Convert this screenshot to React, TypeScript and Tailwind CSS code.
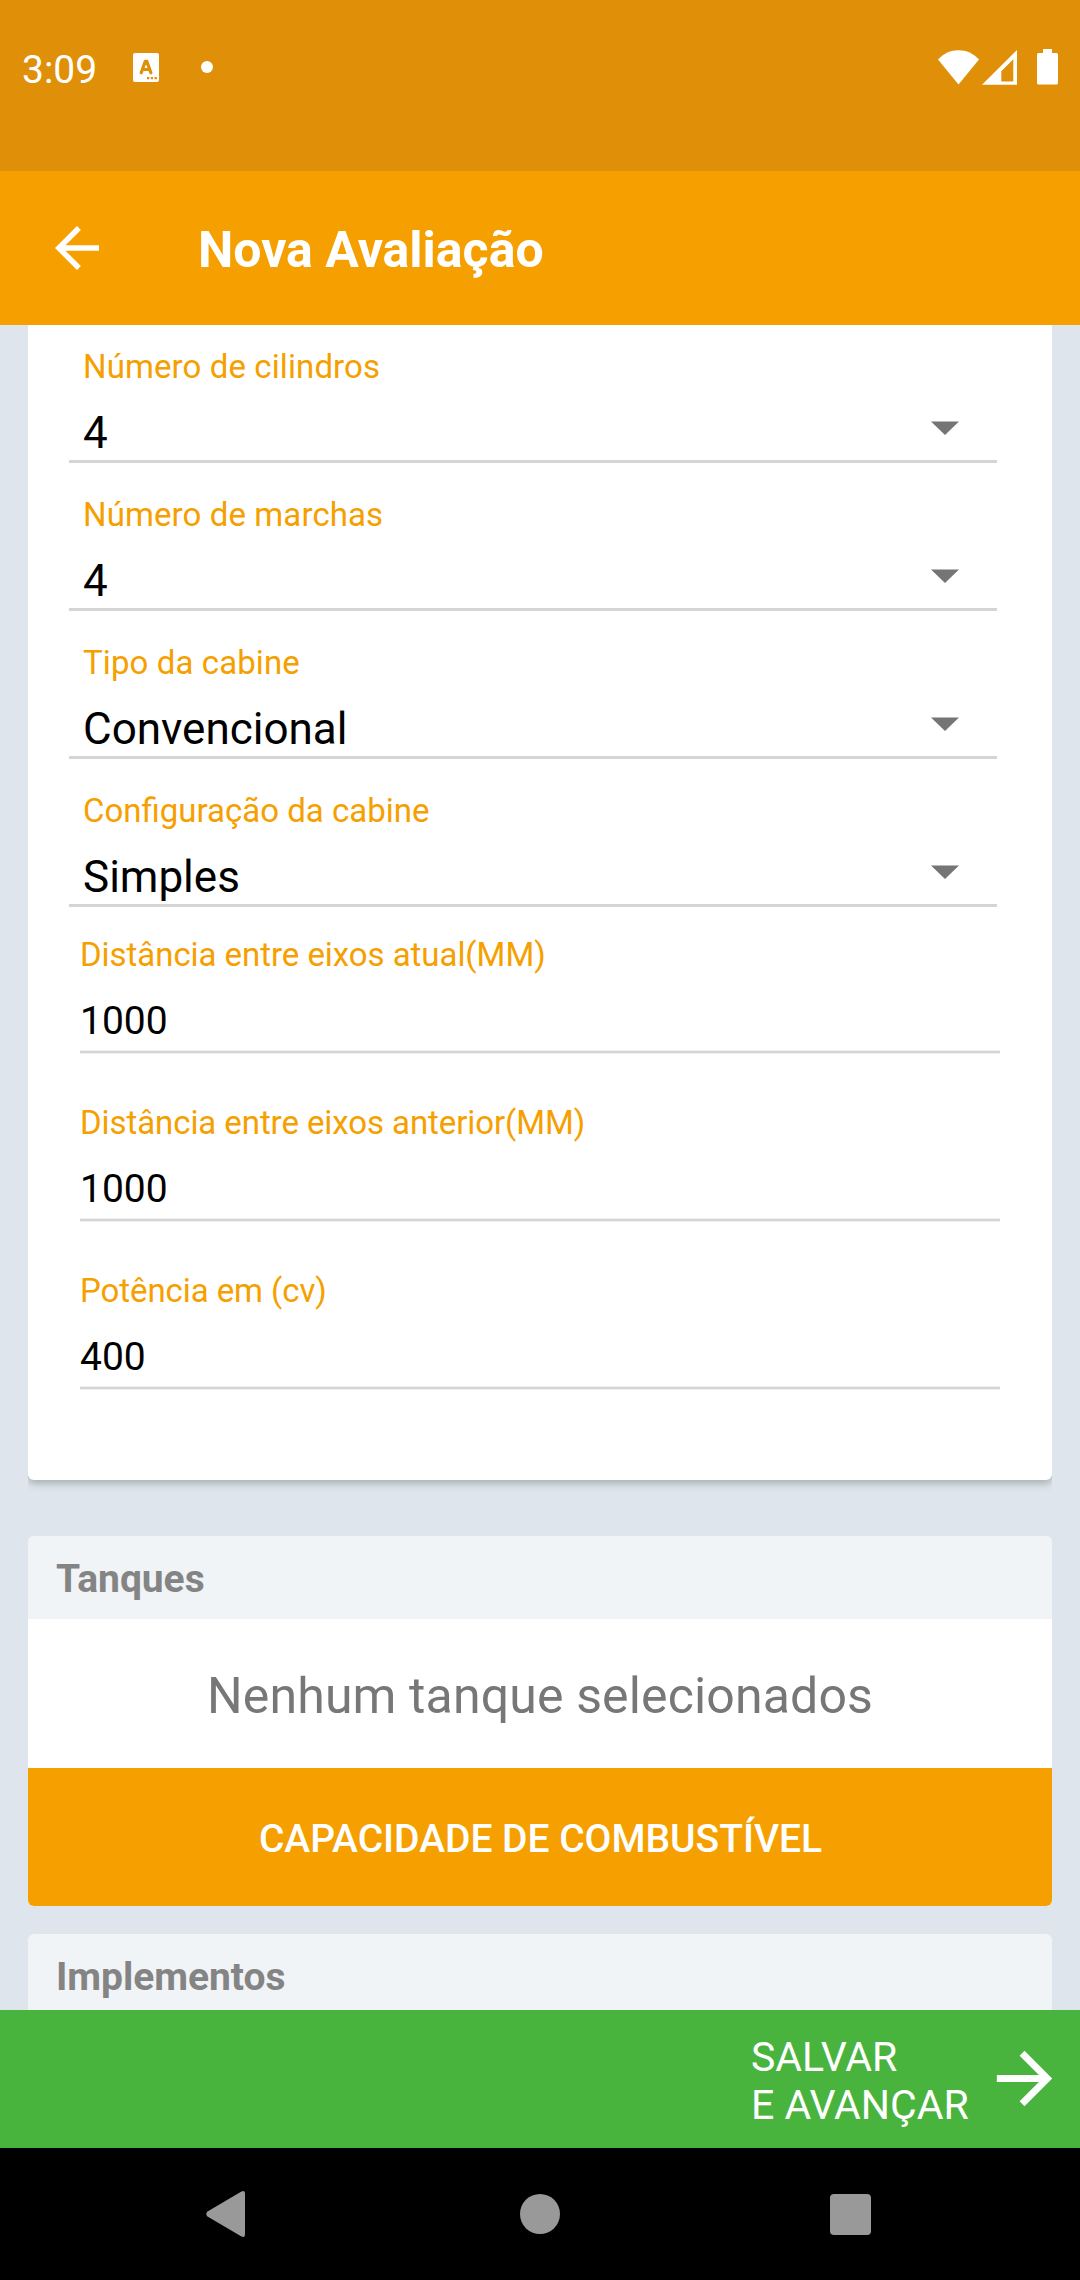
type Field = { label: string; value: string; tracking?: string };

const selects: Field[] = [
  { label: "Número de cilindros", value: "4", tracking: "tracking-[0.1px]" },
  { label: "Número de marchas", value: "4", tracking: "tracking-[0.1px]" },
  { label: "Tipo da cabine", value: "Convencional", tracking: "tracking-[0.1px]" },
  { label: "Configuração da cabine", value: "Simples" },
];

const inputs: Field[] = [
  { label: "Distância entre eixos atual(MM)", value: "1000", tracking: "tracking-[-0.05px]" },
  { label: "Distância entre eixos anterior(MM)", value: "1000", tracking: "tracking-[-0.08px]" },
  { label: "Potência em (cv)", value: "400", tracking: "tracking-[-0.08px]" },
];

function StatusBar() {
  return (
    <div className="flex h-[171px] shrink-0 items-start bg-[#df9008] pt-[47px] text-white">
      <span className="ml-[22px] w-[111px] text-[39px] leading-[46px] whitespace-nowrap">3:09</span>
      <svg className="mt-[6px] h-[29px] w-[26px]" viewBox="0 0 26 29">
        <rect width="26" height="29" rx="2" fill="#fff" />
        <path d="M8.2 19.8 12.300 8.400h1.500l4.100 11.400M9.700 16.500h6.800" fill="none" stroke="#df9008" strokeWidth="3.2" strokeLinecap="round" strokeLinejoin="round" />
        <path d="M14 24h2.300v2.300H14zM17.800 24h2.300v2.300h-2.300zM21.600 24h2.300v2.300h-2.300z" fill="#df9008" />
      </svg>
      <span className="mt-[14px] ml-[42px] size-3 rounded-full bg-white" />
      <div className="mt-[2px] mr-[22px] ml-auto flex">
        <svg className="h-9 w-[41px]" viewBox="0 0 41 36" fill="#fff">
          <path d="M0 10.500C5.600 4.400 12.400 1.200 20.500 1.200S35.400 4.400 41 10.500L20.500 35.500z" />
        </svg>
        <svg className="ml-[3px] h-9 w-[35px]" viewBox="0 0 35 36" fill="#fff" fillRule="evenodd">
          <path d="M35 1v34.700H0zM31.300 10.300 19.300 22.300V32.500H31.300z" />
        </svg>
        <svg className="ml-[20px] h-9 w-[21px]" viewBox="0 0 21 36" fill="#fff">
          <path d="M6 0h9v4h4.500Q21 4 21 5.500v28.500q0 1.600-1.600 1.600H1.600Q0 35.600 0 34V5.500Q0 4 1.500 4H6z" />
        </svg>
      </div>
    </div>
  );
}

function AppBar() {
  return (
    <header className="flex h-[154px] shrink-0 items-center bg-[#f5a000] pl-[44px] text-white">
      <svg className="size-[66px]" viewBox="0 0 24 24" fill="currentColor">
        <path d="M20 11H7.830l5.590-5.590L12 4l-8 8 8 8 1.410-1.410L7.830 13H20v-2z" />
      </svg>
      <h1 className="ml-[88px] pt-[3px] text-[50px] leading-[58px] font-bold">Nova Avaliação</h1>
    </header>
  );
}

function FieldLabel({ label, tracking = "" }: { label: string; tracking?: string }) {
  return <span className={`text-[33px] leading-[40px] text-[#f5a000] ${tracking}`}>{label}</span>;
}

function SelectField({ label, value, tracking }: Field) {
  return (
    <div className="mr-[55px] ml-[41px] flex h-[148px] flex-col border-b-[3px] border-[#d5d5d5] pt-[32px] pl-[14px]">
      <FieldLabel label={label} tracking={tracking} />
      <div className="mt-[16px] flex h-[57px] items-start justify-between pr-[38px]">
        <span className="pt-[5px] text-[44px] leading-[50px] text-black">{value}</span>
        <svg className="mt-[18px] h-[14px] w-[28px]" viewBox="0 0 28 14">
          <path d="M0 .5h28L14 14z" fill="#757575" />
        </svg>
      </div>
    </div>
  );
}

function TextField({ label, value, tracking }: Field) {
  return (
    <div className="mx-[52px] flex h-[168px] flex-col pt-[12px]">
      <FieldLabel label={label} tracking={tracking} />
      <span className="mt-[25px] text-[39px] leading-[42px] text-black">{value}</span>
      <div className="mt-[8px] h-1 border-y border-[#f0f0f0] bg-[#d5d5d5]" />
    </div>
  );
}

function CardTitle({ children }: { children: string }) {
  return (
    <h2 className="h-[83px] bg-[#f0f4f7] pt-[20px] pl-[28px] text-[39px] leading-[46px] font-bold tracking-[-0.05px] text-[#848484]">
      {children}
    </h2>
  );
}

export default function App() {
  return (
    <div className="flex h-[2280px] w-[1080px] flex-col overflow-hidden font-['Roboto',sans-serif]">
      <StatusBar />
      <AppBar />
      <main className="flex h-[1685px] shrink-0 flex-col overflow-hidden bg-[#dee5ed] px-[28px]">
        <section className="h-[1155px] shrink-0 rounded-b-[6px] bg-white shadow-[0_4px_7px_0_rgba(100,112,100,0.42)] [clip-path:inset(0_0_-12px_0)]">
          <div className="-mt-[10px]">
            {selects.map((f) => (
              <SelectField key={f.label} {...f} />
            ))}
          </div>
          <div className="pt-[16px]">
            {inputs.map((f) => (
              <TextField key={f.label} {...f} />
            ))}
          </div>
        </section>
        <section className="mt-[56px] h-[370px] shrink-0 overflow-hidden rounded-[6px] bg-white">
          <CardTitle>Tanques</CardTitle>
          <p className="flex h-[149px] items-center justify-center pt-[4px] text-[50px] leading-[58px] tracking-[0.14px] text-[#777777]">
            Nenhum tanque selecionados
          </p>
          <button className="flex h-[138px] w-full items-center justify-center bg-[#f5a000] pt-[4px] pl-px text-[39px] leading-[46px] font-medium tracking-[-0.03px] text-white">
            CAPACIDADE DE COMBUSTÍVEL
          </button>
        </section>
        <section className="mt-[28px] shrink-0 overflow-hidden rounded-t-[6px]">
          <CardTitle>Implementos</CardTitle>
        </section>
      </main>
      <button className="flex h-[138px] shrink-0 items-center justify-end bg-[#48b43e] pr-[14px] text-left text-white">
        <span className="w-[232px] pt-[4px] text-[41px] leading-[48px] whitespace-nowrap">
          SALVAR
          <br />E AVANÇAR
        </span>
        <svg className="mb-px size-[83px]" viewBox="0 0 24 24" fill="currentColor">
          <path d="M12 4l-1.410 1.410L16.170 11H4v2h12.170l-5.580 5.590L12 20l8-8z" />
        </svg>
      </button>
      <nav className="flex h-[132px] shrink-0 items-center justify-between bg-black pr-[209px] pl-[205px] text-[#999999]">
        <svg className="h-[46px] w-[41px]" viewBox="0 0 41 46" fill="currentColor">
          <path d="M36 .8Q40 -1.500 40 3v40q0 4.500-4 2.200L2.500 25.400Q0 23 2.500 20.600z" />
        </svg>
        <span className="ml-[4px] size-10 rounded-full bg-[#999999]" />
        <span className="size-[41px] rounded-[4px] bg-[#999999]" />
      </nav>
    </div>
  );
}
